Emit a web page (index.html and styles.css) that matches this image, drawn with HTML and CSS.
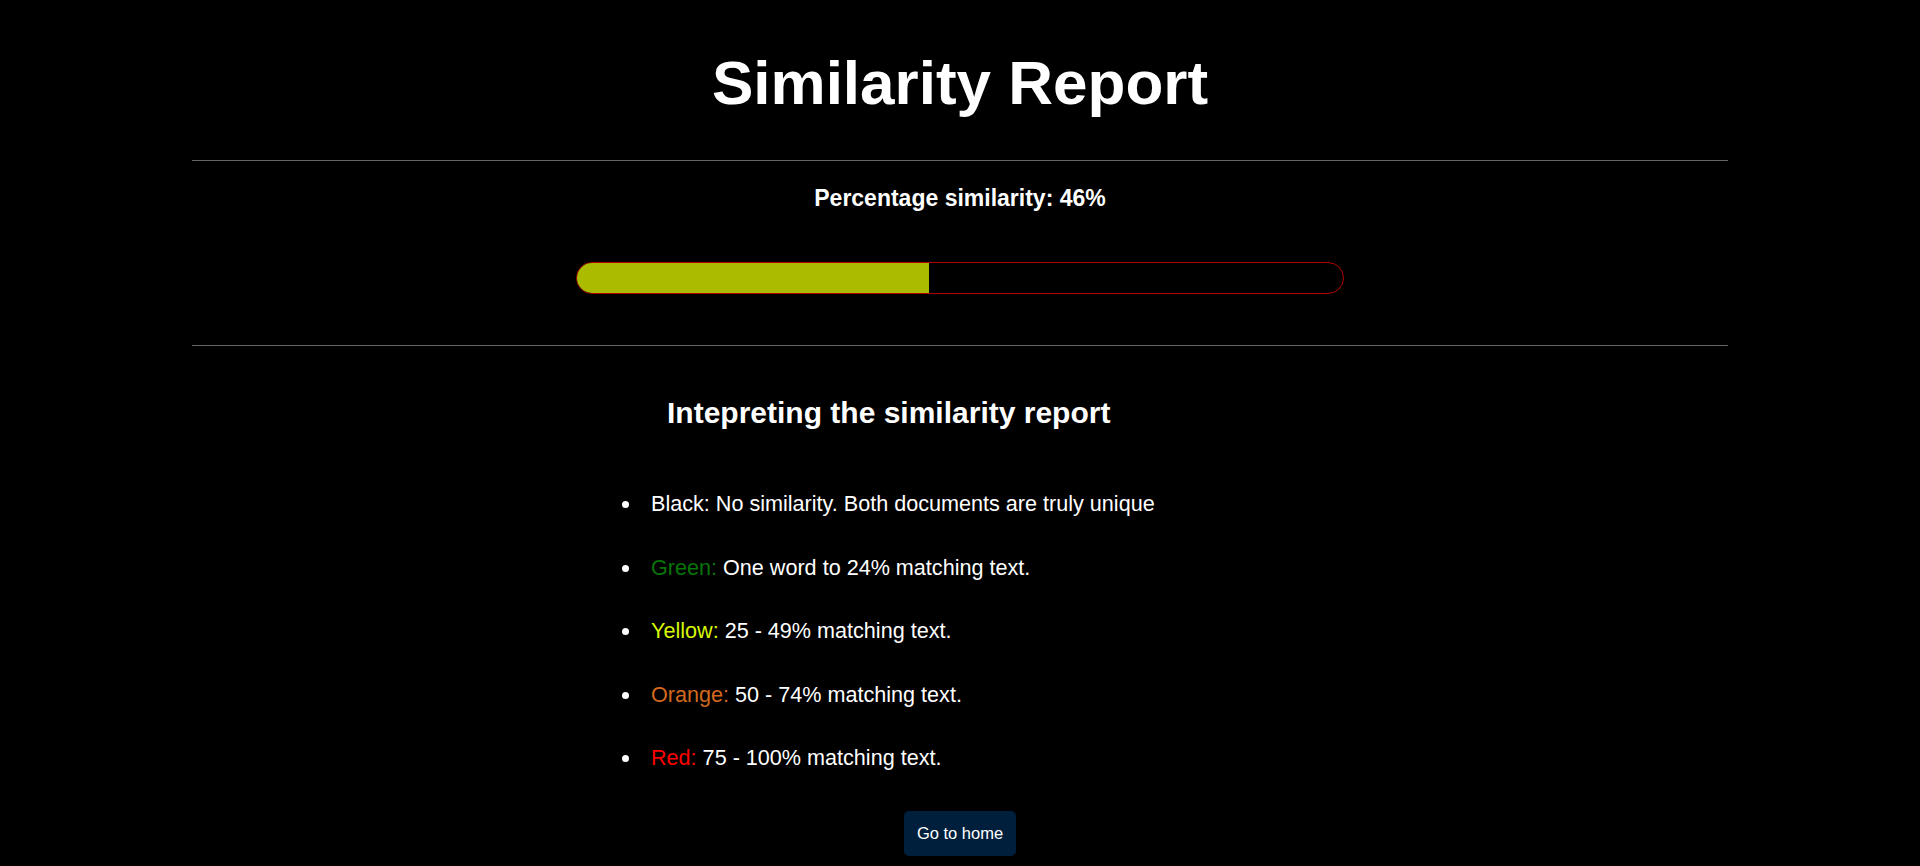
FILE: index.html
```html
<!DOCTYPE html>
<html lang="en">
<head>
<meta charset="utf-8">
<title>Similarity Report</title>
<link rel="stylesheet" href="styles.css">
</head>
<body>
<main class="report">
  <h1 class="title">Similarity Report</h1>
  <hr class="rule">
  <p class="percentage">Percentage similarity: 46%</p>
  <div class="bar"><div class="bar-fill" style="width: 46%"></div></div>
  <hr class="rule rule-second">
  <section class="legend">
    <h2 class="legend-title">Intepreting the similarity report</h2>
    <ul class="legend-list">
      <li>Black: No similarity. Both documents are truly unique</li>
      <li><span class="c-green">Green:</span> One word to 24% matching text.</li>
      <li><span class="c-yellow">Yellow:</span> 25 - 49% matching text.</li>
      <li><span class="c-orange">Orange:</span> 50 - 74% matching text.</li>
      <li><span class="c-red">Red:</span> 75 - 100% matching text.</li>
    </ul>
  </section>
  <button class="home-btn" type="button">Go to home</button>
</main>
</body>
</html>
```

FILE: styles.css
```css
html, body {
  margin: 0;
  padding: 0;
  background: #000;
  color: #fff;
  font-family: "Liberation Sans", Arial, sans-serif;
}

.report {
  padding-top: 47px;
}

.title {
  margin: 0;
  font-size: 62px;
  line-height: 72px;
  font-weight: bold;
  text-align: center;
}

.rule {
  width: 80%;
  height: 0;
  margin: 41px auto 0;
  border: none;
  border-top: 1px solid #666;
}

.rule-second {
  margin-top: 51px;
}

.percentage {
  margin: 24px 0 0;
  font-size: 23px;
  line-height: 27px;
  font-weight: bold;
  text-align: center;
}

.bar {
  box-sizing: border-box;
  width: 40%;
  height: 32px;
  margin: 50px auto 0;
  border: 1px solid #b00000;
  border-radius: 16px;
  overflow: hidden;
}

.bar-fill {
  height: 100%;
  background: #aabb00;
}

.legend {
  width: fit-content;
  margin-left: calc(50% - 349px);
}

.legend-title {
  margin: 49px 0 0 56px;
  font-size: 30px;
  line-height: 36px;
  font-weight: bold;
}

.legend-list {
  margin: 60px 0 0;
  padding-left: 31px;
  font-size: 21.6px;
  line-height: 26px;
}

.legend-list li {
  padding-left: 9px;
  margin-bottom: 37.5px;
}

.legend-list li:last-child {
  margin-bottom: 0;
}

.c-green { color: #087508; }
.c-yellow { color: #d8f800; }
.c-orange { color: #d2691e; }
.c-red { color: #ff0000; }

.home-btn {
  display: block;
  margin: 40px auto 0;
  height: 45px;
  padding: 0 13px;
  border: none;
  border-radius: 5px;
  background: #001f3d;
  color: #fff;
  font-family: "Liberation Sans", Arial, sans-serif;
  font-size: 16.5px;
  line-height: 45px;
  cursor: pointer;
}
```
